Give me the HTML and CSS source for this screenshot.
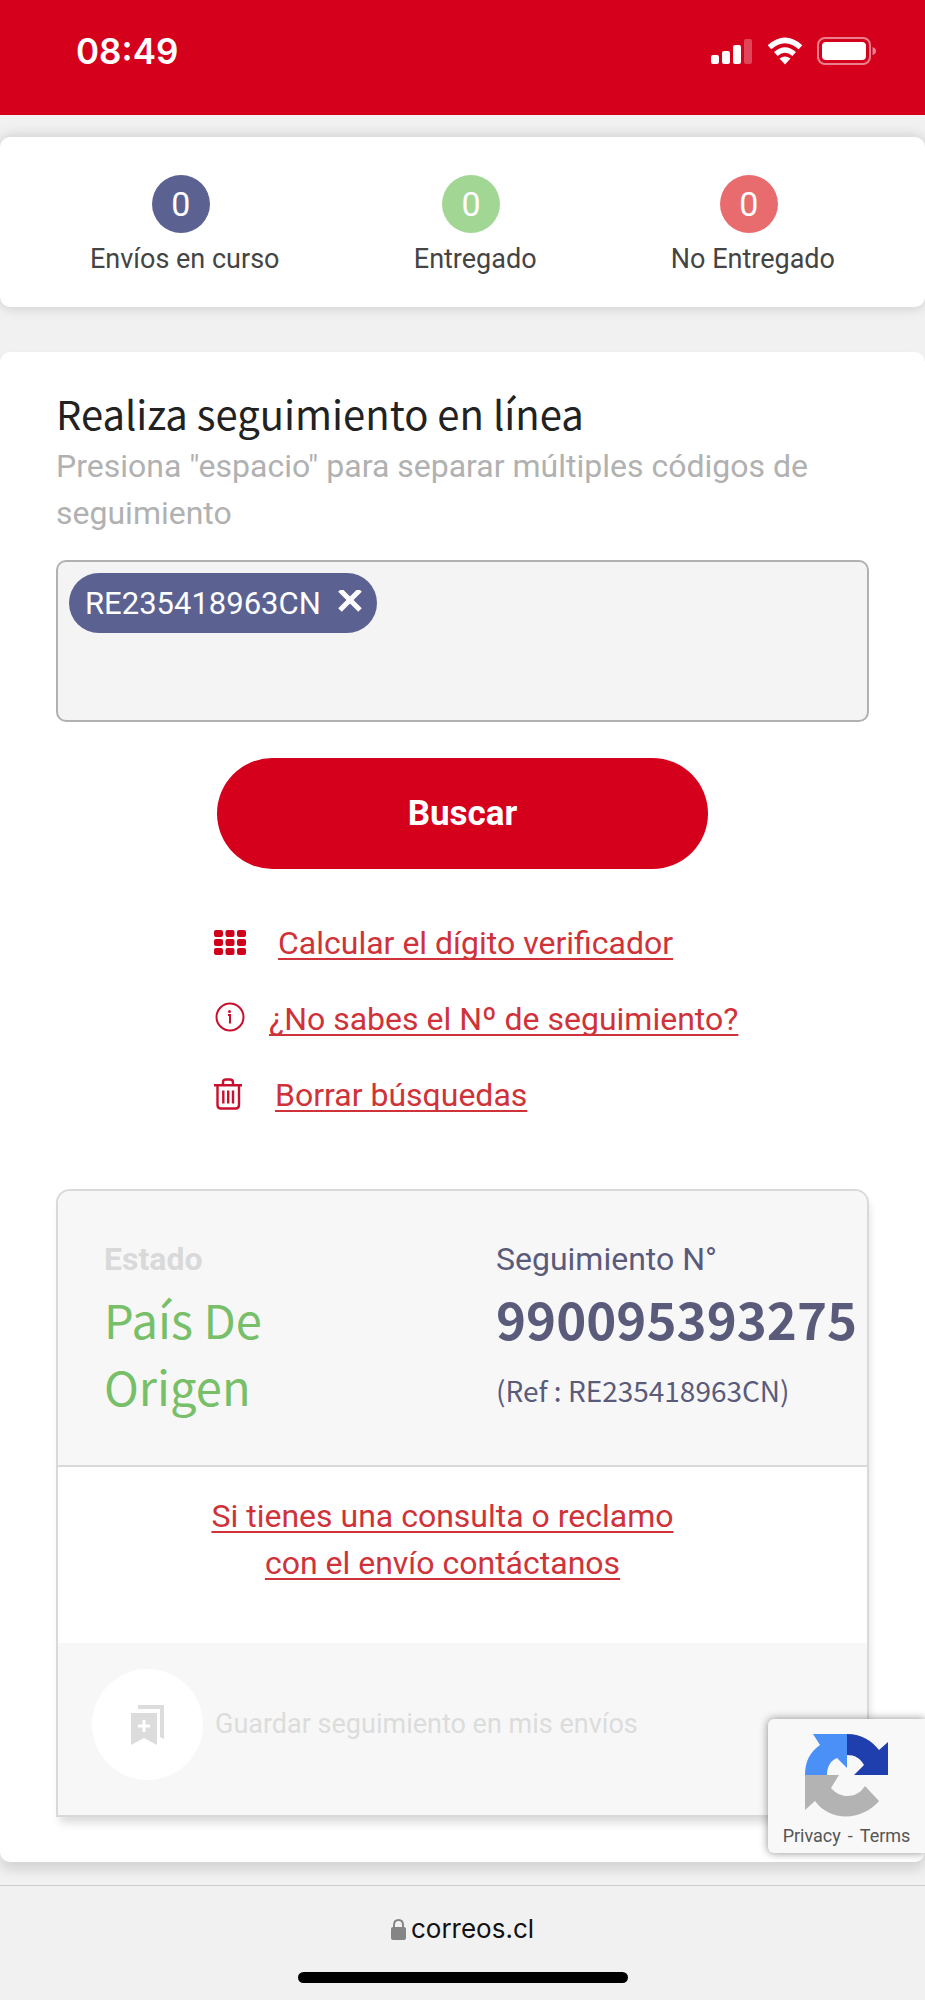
FILE: index.html
```html
<!DOCTYPE html>
<html lang="es">
<head>
<meta charset="utf-8">
<meta name="viewport" content="width=device-width, initial-scale=1">
<title>Seguimiento en línea</title>
<link rel="stylesheet" href="styles.css">
</head>
<body>
<header class="status-bar">
  <time class="clock">08:49</time>
  <div class="status-icons">
    <svg width="42" height="28" viewBox="0 0 42 28" fill="#fff" aria-hidden="true">
      <rect x="0" y="18" width="8" height="9" rx="2"/><rect x="11" y="14" width="8" height="13" rx="2"/><rect x="22" y="8" width="8" height="19" rx="2"/><rect x="33" y="2" width="8" height="25" rx="2" opacity=".27"/>
    </svg>
    <svg width="36" height="28" viewBox="0 0 36 28" aria-hidden="true">
      <path d="M2.500 10.200Q18-3.500 33.500 10.200M8.800 17Q18 9 27.200 17" fill="none" stroke="#fff" stroke-width="5.400"/>
      <path d="M12.500 21.500Q18 17.500 23.500 21.500L18 27.500Z" fill="#fff"/>
    </svg>
    <svg width="60" height="28" viewBox="0 0 60 28" aria-hidden="true">
      <rect x="1" y="1" width="52" height="26" rx="7" fill="none" stroke="#fff" stroke-width="2" opacity=".5"/>
      <rect x="5" y="5" width="44" height="18" rx="4" fill="#fff"/>
      <path d="M55.500 10Q59 11 59 14T55.500 18Z" fill="#fff" opacity=".5"/>
    </svg>
  </div>
</header>

<section class="summary" aria-label="Resumen">
  <div class="summary-item"><span class="count count-active">0</span><span>Envíos en curso</span></div>
  <div class="summary-item"><span class="count count-done">0</span><span>Entregado</span></div>
  <div class="summary-item"><span class="count count-failed">0</span><span>No Entregado</span></div>
</section>

<main class="panel">
  <h1 class="title">Realiza seguimiento en línea</h1>
  <label class="hint" for="codes">Presiona "espacio" para separar múltiples códigos de seguimiento</label>
  <div class="code-box">
    <span class="tag">RE235418963CN
      <button class="tag-close" type="button" aria-label="Quitar código">
        <svg width="26" height="26" viewBox="0 0 26 26" aria-hidden="true"><path d="M3 0L23 20M23 0L3 20" stroke="#fff" stroke-width="5"/></svg>
      </button>
    </span>
    <input class="code-input" id="codes" type="text">
  </div>
  <button class="search" type="button">Buscar</button>

  <ul class="tools">
    <li>
      <svg width="40" height="34" viewBox="0 0 40 34" fill="#d0021b" aria-hidden="true">
        <rect x="0" y="4" width="9" height="7" rx="2"/><rect x="11.500" y="4" width="9" height="7" rx="2"/><rect x="23" y="4" width="9" height="7" rx="2"/>
        <rect x="0" y="13" width="9" height="7" rx="2"/><rect x="11.500" y="13" width="9" height="7" rx="2"/><rect x="23" y="13" width="9" height="7" rx="2"/>
        <rect x="0" y="22" width="9" height="7" rx="2"/><rect x="11.500" y="22" width="9" height="7" rx="2"/><rect x="23" y="22" width="9" height="7" rx="2"/>
      </svg>
      <a class="link" href="#digito">Calcular el dígito verificador</a>
    </li>
    <li>
      <svg width="31" height="34" viewBox="0 0 31 34" aria-hidden="true">
        <circle cx="16" cy="15" r="13.500" fill="none" stroke="#c8102e" stroke-width="2"/>
        <circle cx="15.500" cy="9.500" r="1.500" fill="#c8102e"/><path d="M14 13H16V21.500" fill="none" stroke="#c8102e" stroke-width="2"/>
      </svg>
      <a class="link" href="#ayuda">¿No sabes el Nº de seguimiento?</a>
    </li>
    <li>
      <svg width="37" height="34" viewBox="0 0 37 34" fill="none" stroke="#c8102e" stroke-width="2.400" aria-hidden="true">
        <path d="M0 7.200H28M9 7V4.500Q9 1.500 12 1.500H16Q19 1.500 19 4.500V7M3.500 8V27Q3.500 30.500 7 30.500H21.500Q25 30.500 25 27V8M9.300 12.500V25.500M14.200 12.500V25.500M19 12.500V25.500"/>
      </svg>
      <a class="link" href="#borrar">Borrar búsquedas</a>
    </li>
  </ul>

  <article class="result">
    <div class="result-head">
      <div class="state">
        <p class="state-label">Estado</p>
        <p class="state-value">País De Origen</p>
      </div>
      <div class="tracking">
        <p class="tracking-label">Seguimiento N°</p>
        <p class="tracking-number">990095393275</p>
        <p class="tracking-ref">(Ref : RE235418963CN)</p>
      </div>
    </div>
    <div class="contact"><a class="link" href="#contacto">Si tienes una consulta o reclamo<br>con el envío contáctanos</a></div>
    <button class="save" type="button" disabled>
      <span class="save-icon">
        <svg width="34" height="40" viewBox="0 0 34 40" fill="#dcdcdc" aria-hidden="true">
          <path d="M7 0H33V34L29 32V4H7Z"/>
          <path fill-rule="evenodd" d="M0 8H26V40L13 33L0 40ZM11.500 15V19.500H7V22.500H11.500V27H14.500V22.500H19V19.500H14.500V15Z"/>
        </svg>
      </span>
      Guardar seguimiento en mis envíos
    </button>
  </article>

  <aside class="captcha" aria-label="reCAPTCHA">
    <svg width="84" height="84" viewBox="0 0 84 84" aria-hidden="true">
      <path fill="#4a90f6" d="M0 42C0 28 5 19 15 12L8 1H42V35L32 25C25 28 22 34 22 42Z"/>
      <path fill="#1f3fae" d="M42 1C57 1 67 8 74 17L83 9V42H49L59 32C55 25 50 22 42 22Z"/>
      <path fill="#b3b3b3" d="M0 42H34L26 55C35 66 52 66 60 53L74 68C56 89 24 88 10 68L0 77Z"/>
    </svg>
    <span class="captcha-links"><a href="#privacy">Privacy</a><span>-</span><a href="#terms">Terms</a></span>
  </aside>
</main>

<footer class="browser-bar">
  <div class="address">
    <svg width="15" height="21" viewBox="0 0 15 21" aria-hidden="true"><rect y="8" width="15" height="13" rx="2" fill="#858585"/><path d="M3 9V6Q3 1 7.500 1T12 6V9" fill="none" stroke="#858585" stroke-width="2"/></svg>
    <span>correos.cl</span>
  </div>
  <div class="home-indicator"></div>
</footer>
</body>
</html>
```
FILE: styles.css
```css
* { box-sizing: border-box; }

body {
  margin: 0;
  background: #f1f1f1;
  color: #444;
  font-family: Roboto, "Liberation Sans", sans-serif;
  font-size: 32px;
  line-height: 47px;
}

h1, p, ul { margin: 0; padding: 0; }
button { font: inherit; border: 0; cursor: pointer; }

.status-bar {
  display: flex;
  justify-content: space-between;
  align-items: center;
  height: 115px;
  padding: 0 48px 14px 76px;
  background: #d5001c;
  color: #fff;
}
.clock { font: 600 35px/44px Inter, sans-serif; }
.status-icons { display: flex; align-items: center; gap: 14px; }

.summary {
  display: flex;
  justify-content: space-between;
  margin-top: 22px;
  padding: 38px 90px 28px;
  border-radius: 10px;
  background: #fff;
  box-shadow: 0 0 14px rgba(0, 0, 0, .18);
  font-size: 27px;
  line-height: 40px;
}
.summary-item { display: flex; flex-direction: column; align-items: center; gap: 6px; }
.count {
  width: 58px;
  height: 58px;
  margin-right: 8px;
  border-radius: 50%;
  color: #fff;
  font-size: 34px;
  line-height: 58px;
  text-align: center;
}
.count-active { background: #5b6291; }
.count-done { background: #a1d694; }
.count-failed { background: #e86c6e; }

.panel {
  position: relative;
  margin-top: 45px;
  padding: 31px 56px 45px;
  border-radius: 10px;
  background: #fff;
  box-shadow: 0 8px 12px rgba(0, 0, 0, .12);
}
.title {
  color: #222;
  font: 400 40px/60px "Noto Sans CJK SC", sans-serif;
}
.hint { display: block; color: #b1b1b1; }

.code-box {
  display: flex;
  align-items: flex-start;
  gap: 12px;
  min-height: 162px;
  margin-top: 23px;
  padding: 11px;
  border: 2px solid #b1b1b1;
  border-radius: 10px;
  background: #f4f4f4;
}
.tag {
  display: flex;
  align-items: center;
  gap: 16px;
  height: 60px;
  padding: 0 14px 0 16px;
  border-radius: 30px;
  background: #5b6291;
  color: #fff;
  font-size: 31px;
}
.tag-close { display: flex; padding: 0; background: none; }
.code-input {
  flex: 1;
  min-width: 0;
  height: 60px;
  border: 0;
  outline: 0;
  background: none;
  font: inherit;
}

.search {
  display: block;
  width: 491px;
  max-width: 100%;
  height: 111px;
  margin: 36px auto 0;
  border-radius: 56px;
  background: #d5001c;
  color: #fff;
  font-size: 35px;
  font-weight: 700;
}

.tools { margin-top: 36px; padding-left: 158px; list-style: none; }
.tools li { display: flex; align-items: center; gap: 24px; height: 76px; }
.link {
  color: #cf3339;
  text-decoration: underline 2px;
  text-decoration-skip-ink: none;
  text-underline-offset: 4px;
}

.result {
  margin-top: 56px;
  border: 2px solid #d9d9d9;
  border-radius: 14px 14px 0 0;
  box-shadow: 2px 8px 8px -2px rgba(0, 0, 0, .14);
}
.result-head {
  display: grid;
  grid-template-columns: 392px 1fr;
  padding: 45px 8px 41px 46px;
  border-bottom: 2px solid #d9d9d9;
  border-radius: 12px 12px 0 0;
  background: #f7f7f7;
}
.state-label { color: #d9d9d9; font-weight: 700; }
.state-value {
  max-width: 200px;
  margin-top: 2px;
  color: #77bf69;
  font: 400 47px/67px "Noto Sans CJK SC", sans-serif;
}
.tracking { color: #5a5b7b; font-family: "Noto Sans CJK SC", sans-serif; }
.tracking-label { font-family: Roboto, sans-serif; }
.tracking-number { margin-top: 2px; font-size: 51px; font-weight: 700; line-height: 67px; }
.tracking-ref { margin-top: 5px; font-size: 28px; line-height: 67px; }
.contact { padding: 26px 40px 56px 0; text-align: center; }
.save {
  display: flex;
  align-items: center;
  gap: 12px;
  width: 100%;
  padding: 26px 34px 35px;
  background: #f7f7f7;
  color: #dcdcdc;
  font-size: 27px;
  text-align: left;
}
.save-icon {
  display: flex;
  align-items: center;
  justify-content: center;
  width: 111px;
  height: 111px;
  border-radius: 50%;
  background: #fff;
}

.captcha {
  position: absolute;
  right: 0;
  bottom: 9px;
  display: flex;
  flex-direction: column;
  align-items: center;
  gap: 4px;
  width: 157px;
  padding: 14px 0 2px;
  border-radius: 6px 0 0 6px;
  background: #f8f8f8;
  box-shadow: 0 0 8px rgba(0, 0, 0, .45);
  color: #555;
  font-size: 18px;
  line-height: 30px;
}
.captcha-links { display: flex; gap: 7px; }
.captcha a { color: inherit; text-decoration: none; }

.browser-bar {
  margin-top: 23px;
  padding: 24px 0 18px;
  border-top: 1px solid #c9cdcb;
  background: #f1f1f1;
}
.address {
  display: flex;
  justify-content: center;
  align-items: center;
  gap: 5px;
  color: #111;
  font: 400 26px/38px Inter, sans-serif;
}
.home-indicator {
  width: 330px;
  height: 11px;
  margin: 24px auto 0;
  border-radius: 6px;
  background: #000;
}
```
